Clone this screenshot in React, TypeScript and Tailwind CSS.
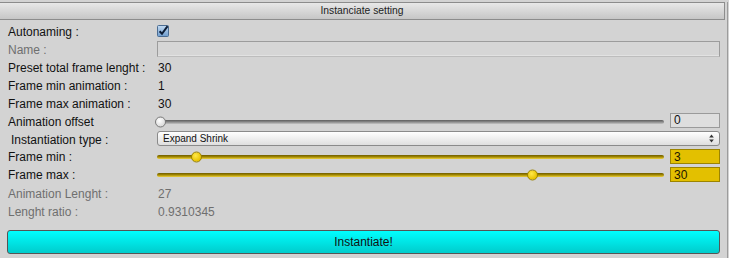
import React from 'react'

const font = { fontFamily: '"Liberation Sans", Arial, sans-serif' }

function Row({ label, h, muted, indent, children }: { label: string; h: string; muted?: boolean; indent?: boolean; children?: React.ReactNode }) {
  return (
    <div className={`flex items-center ${h}`}>
      <div className={`w-[149px] shrink-0 text-[12px] whitespace-nowrap ${indent ? 'pl-[3px]' : ''} ${muted ? 'text-[#6f6f6f]' : 'text-[#111]'}`}>
        {label}
      </div>
      <div className="flex-1 flex items-center">{children}</div>
    </div>
  )
}

function Value({ children, muted }: { children: React.ReactNode; muted?: boolean }) {
  return <span className={`pl-[1px] text-[12px] ${muted ? 'text-[#6f6f6f]' : 'text-[#111]'}`}>{children}</span>
}

function Slider({ left, gold }: { left: number; gold?: boolean }) {
  return (
    <div className="relative flex-1 h-[12px] flex items-center mr-[6px]">
      <div
        className={`w-full h-[4px] rounded-full ${
          gold
            ? 'bg-gradient-to-b from-[#6e5c00] via-[#a58a00] to-[#f0d33a]'
            : 'bg-gradient-to-b from-[#5c5c5c] via-[#8a8a8a] to-[#c4c4c4]'
        }`}
      />
      <div
        className={`absolute top-1/2 -translate-y-1/2 w-[11px] h-[11px] rounded-full border ${
          gold
            ? 'bg-[radial-gradient(circle_at_40%_35%,#ffe84a,#e8c200_70%)] border-[#9a8200]'
            : 'bg-[radial-gradient(circle_at_40%_35%,#ffffff,#dcdcdc_70%)] border-[#7a7a7a]'
        }`}
        style={{ left: left - 157 - 5.5 }}
      />
    </div>
  )
}

function NumField({ value, gold, className }: { value: string; gold?: boolean; className?: string }) {
  return (
    <div
      className={`w-[50px] h-[15px] shrink-0 border flex items-center pl-[3px] text-[12px] leading-none ${
        gold ? 'bg-[#e3c000] border-[#9c8400] text-[#1c1700]' : 'bg-[#dedede] border-[#9a9a9a] text-[#111]'
      } ${className ?? ''}`}
    >
      {value}
    </div>
  )
}

export default function App() {
  return (
    <div className="w-[729px] h-[258px] bg-[#d3d3d3] overflow-hidden" style={font}>
      <div className="w-[728px] h-[257px] border-r border-b border-[#9c9c9c]">
        <div className="mt-[2px] mr-[2px] h-[18px] bg-gradient-to-b from-[#e8e8e8] to-[#c6c6c6] border-t border-r border-b border-[#8c8c8c] flex items-center justify-center text-[10.3px] text-[#222]">
          Instanciate setting
        </div>

        <div className="pl-[8px] pr-[7px] pt-[3px]">
          <Row label="Autonaming :" h="h-[18px]">
            <svg width="12" height="12" viewBox="0 0 12 12" className="-mt-[2px]">
              <defs>
                <linearGradient id="cb" x1="0" y1="0" x2="0" y2="1">
                  <stop offset="0" stopColor="#c3dbf3" />
                  <stop offset="1" stopColor="#6e9ccd" />
                </linearGradient>
              </defs>
              <rect x="0.5" y="0.5" width="11" height="11" rx="1" fill="url(#cb)" stroke="#4b6c92" />
              <path d="M2.6 6.2 L5 8.8 L10.6 1.2" fill="none" stroke="#0d1d36" strokeWidth="2" />
            </svg>
          </Row>
          <Row label="Name :" h="h-[18px]" muted>
            <div className="w-full h-[16px] -mt-[2px] bg-[#d6d6d6] border border-[#9c9c9c] border-b-[#bdbdbd] shadow-[inset_0_-1px_0_#e2e2e2]" />
          </Row>
          <Row label="Preset total frame lenght :" h="h-[18px]">
            <Value>30</Value>
          </Row>
          <Row label="Frame min animation :" h="h-[18px]">
            <Value>1</Value>
          </Row>
          <Row label="Frame max animation :" h="h-[17px]">
            <Value>30</Value>
          </Row>
          <Row label="Animation offset" h="h-[19px]">
            <Slider left={160.5} />
            <NumField value="0" className="-mt-[3px]" />
          </Row>
          <Row label="Instantiation type :" h="h-[17px]" indent>
            <div className="w-full h-[15px] -mt-[2px] rounded-[3px] border border-[#8a8a8a] bg-gradient-to-b from-[#ffffff] to-[#dedede] flex items-center justify-between pl-[5px] pr-[5px]">
              <span className="text-[10px] text-[#111] font-medium">Expand Shrink</span>
              <svg width="5" height="9" viewBox="0 0 5 9">
                <path d="M2.5 0.5 L4.8 3.6 L0.2 3.6 Z" fill="#333" />
                <path d="M2.5 8.5 L4.8 5.4 L0.2 5.4 Z" fill="#333" />
              </svg>
            </div>
          </Row>
          <Row label="Frame min :" h="h-[17px]">
            <Slider left={196} gold />
            <NumField value="3" gold />
          </Row>
          <Row label="Frame max :" h="h-[20px]">
            <Slider left={532} gold />
            <NumField value="30" gold className="-mt-[1px]" />
          </Row>
          <Row label="Animation Lenght :" h="h-[18px]" muted>
            <Value muted>27</Value>
          </Row>
          <Row label="Lenght ratio :" h="h-[18px]" muted>
            <Value muted>0.9310345</Value>
          </Row>

          <button
            type="button"
            className="mt-[9px] -ml-[1px] w-[713px] h-[24px] rounded-[3px] border border-[#555] bg-gradient-to-b from-[#00ffff] to-[#00cccc] text-[12px] text-[#111] flex items-center justify-center"
          >
            Instantiate!
          </button>
        </div>
      </div>
    </div>
  )
}
